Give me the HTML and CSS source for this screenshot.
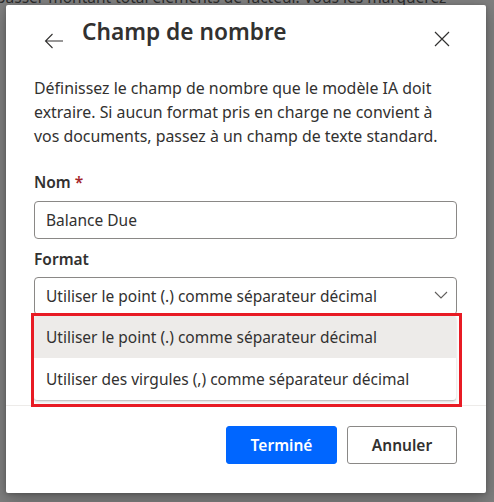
FILE: index.html
```html
<!DOCTYPE html>
<html lang="fr">
<head>
<meta charset="utf-8">
<title>Champ de nombre</title>
<link rel="stylesheet" href="styles.css">
</head>
<body>
<div class="backdrop-text"><span>passer montant total éléments de facteur. Vous les marquerez</span></div>
<div class="dialog">
  <div class="header">
    <button class="icon-btn back" aria-label="Retour">
      <svg width="20" height="16" viewBox="0 0 20 16"><path d="M19 8H1.5M8.5 1L1.5 8l7 7" fill="none" stroke="#323130" stroke-width="1.1"/></svg>
    </button>
    <h1 class="title">Champ de nombre</h1>
    <button class="icon-btn close" aria-label="Fermer">
      <svg width="16" height="16" viewBox="0 0 16 16"><path d="M1 1l14 14M15 1L1 15" fill="none" stroke="#323130" stroke-width="1.2"/></svg>
    </button>
  </div>
  <p class="desc">Définissez le champ de nombre que le modèle IA doit extraire. Si aucun format pris en charge ne convient à vos documents, passez à un champ de texte standard.</p>
  <label class="label label-nom">Nom <span class="req">*</span></label>
  <div class="field">Balance Due</div>
  <label class="label label-format">Format</label>
  <div class="field select">
    <span>Utiliser le point (.) comme séparateur décimal</span>
    <svg class="chev" width="14" height="8" viewBox="0 0 14 8"><path d="M1 1l6 6 6-6" fill="none" stroke="#605e5c" stroke-width="1.1"/></svg>
  </div>
  <div class="footer">
    <button class="btn primary">Terminé</button>
    <button class="btn">Annuler</button>
  </div>
  <div class="menu">
    <div class="option selected">Utiliser le point (.) comme séparateur décimal</div>
    <div class="option">Utiliser des virgules (,) comme séparateur décimal</div>
  </div>
  <div class="highlight"></div>
</div>
</body>
</html>
```
FILE: styles.css
```css
html, body {
  margin: 0;
  padding: 0;
}
body {
  width: 494px;
  height: 502px;
  overflow: hidden;
  background: #7f7f7f;
  font-family: "Noto Sans", "Open Sans", sans-serif;
  color: #323130;
}
.backdrop-text {
  height: 5px;
  overflow: hidden;
  padding-left: 0;
  color: #2c2c2c;
  font-size: 15.5px;
  white-space: nowrap;
}
.backdrop-text span {
  display: block;
  margin-top: -12px;
  margin-left: -4px;
  line-height: 18px;
}
.dialog {
  position: relative;
  margin-left: 6px;
  width: 480px;
  height: 488px;
  background: #fff;
  border-radius: 2px;
  box-shadow: 0 6px 18px rgba(0,0,0,0.28), 0 1px 4px rgba(0,0,0,0.2);
  display: flex;
  flex-direction: column;
  padding: 0 29px 0 28px;
  box-sizing: border-box;
}
.header {
  display: flex;
  align-items: flex-start;
  padding-top: 12px;
  height: 30px;
}
.icon-btn {
  border: 0;
  background: none;
  padding: 0;
  margin: 0;
  display: flex;
}
.back {
  margin: 16px 0 0 10px;
}
.title {
  margin: 0 0 0 18px;
  font-size: 22.7px;
  font-weight: 600;
  line-height: 30px;
  color: #323130;
  flex: 1;
}
.close {
  margin: 14px 7px 0 0;
}
.desc {
  margin: 29px 0 0;
  font-size: 15.9px;
  line-height: 24px;
  color: #323130;
}
.label {
  display: block;
  font-size: 15.5px;
  font-weight: 600;
  line-height: 24px;
}
.label-nom {
  margin-top: 22px;
}
.label-format {
  margin-top: 8px;
}
.req {
  color: #a4262c;
}
.field {
  margin-top: 7px;
  height: 38px;
  box-sizing: border-box;
  border: 1px solid #8a8886;
  border-radius: 4px;
  padding: 0 11px;
  display: flex;
  align-items: center;
  font-size: 15.5px;
  color: #323130;
}
.select {
  margin-top: 6px;
  justify-content: space-between;
  padding-right: 8px;
}
.chev {
  margin-top: -2px;
}
.footer {
  margin: auto -29px 0 -28px;
  border-top: 1px solid #edebe9;
  padding: 20px 29px 29px 0;
  display: flex;
  justify-content: flex-end;
  gap: 10px;
}
.btn {
  height: 38px;
  width: 110px;
  box-sizing: border-box;
  border: 1px solid #8a8886;
  border-radius: 3px;
  background: #fff;
  font-family: inherit;
  font-size: 15.5px;
  font-weight: 600;
  color: #323130;
  padding: 0;
}
.btn.primary {
  width: 111px;
  background: #0066ff;
  border-color: #0066ff;
  color: #fff;
}
.menu {
  position: absolute;
  left: 28px;
  top: 311px;
  width: 422px;
  background: #fff;
  border-radius: 3px;
  box-shadow: 0 1.6px 3.6px rgba(0,0,0,0.16), 0 0.3px 0.9px rgba(0,0,0,0.12);
  overflow: hidden;
}
.option {
  height: 42px;
  display: flex;
  align-items: center;
  padding-left: 12px;
  font-size: 15.5px;
  color: #323130;
}
.option.selected {
  background: #edebe9;
}
.highlight {
  position: absolute;
  left: 25px;
  top: 308px;
  width: 431px;
  height: 94px;
  box-sizing: border-box;
  border: 3px solid #e81b24;
}
```
